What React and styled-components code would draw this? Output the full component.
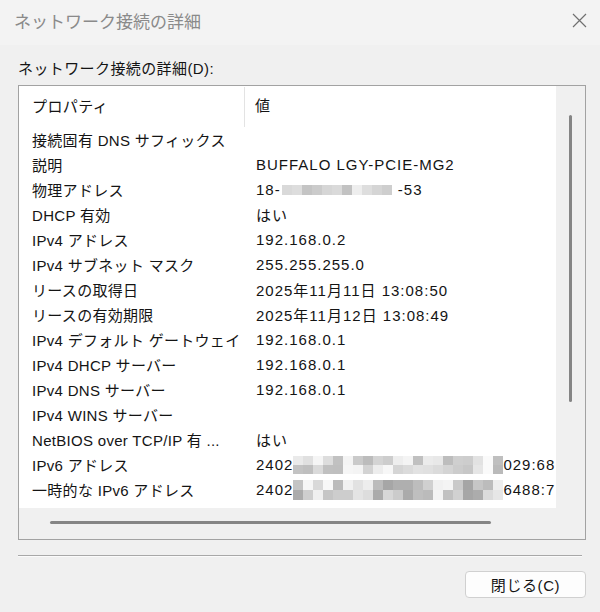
import React from 'react';
import styled, { createGlobalStyle } from 'styled-components';

const GlobalStyle = createGlobalStyle`
  html, body {
    margin: 0;
    padding: 0;
    background: #f0f0f0;
  }
  * {
    box-sizing: border-box;
  }
`;

const FONT = `"Liberation Sans", "Noto Sans CJK JP", sans-serif`;

const Window = styled.div`
  width: 600px;
  height: 612px;
  background: #f0f0f0;
  display: flex;
  flex-direction: column;
  font-family: ${FONT};
  color: #141414;
  overflow: hidden;
`;

const TitleBar = styled.div`
  height: 45px;
  background: #f3f3f3;
  display: flex;
  align-items: center;
  justify-content: space-between;
  padding: 0 13px 5px 14px;
`;

const Title = styled.div`
  font-family: "Noto Sans CJK JP", sans-serif;
  font-size: 17px;
  color: #8a8a8a;
`;

const CloseButton = styled.div`
  width: 16px;
  height: 16px;
  display: flex;
  align-items: center;
  justify-content: center;
`;

const Body = styled.div`
  flex: 1;
  display: flex;
  flex-direction: column;
  padding: 14px 14px 0 18px;
`;

const GroupLabel = styled.div`
  font-size: 15px;
  letter-spacing: 0.4px;
  line-height: 20px;
  margin-bottom: 6px;
`;

const ListBox = styled.div`
  height: 455px;
  border: 1px solid #a2a2a2;
  display: grid;
  grid-template-columns: 537px 1fr;
  grid-template-rows: 422px 1fr;
  background: #f0f0f0;
`;

const ListArea = styled.div`
  background: #fff;
  overflow: hidden;
  display: flex;
  flex-direction: column;
`;

const HeaderRow = styled.div`
  height: 41px;
  display: grid;
  grid-template-columns: 226px 1fr;
  align-items: stretch;
`;

const HeaderCell = styled.div`
  display: flex;
  align-items: center;
  padding-left: ${(p) => p.$pad}px;
  font-size: 15px;
  letter-spacing: 0.4px;
  padding-bottom: 4px;
  border-right: ${(p) => (p.$divider ? '1px solid #e3e3e3' : 'none')};
  margin-top: ${(p) => (p.$divider ? '1px' : '0')};
`;

const Row = styled.div`
  height: 25px;
  display: grid;
  grid-template-columns: 227px 1fr;
  align-items: center;
  font-size: 15px;
  white-space: nowrap;
`;

const PropCell = styled.div`
  padding-left: 13px;
  letter-spacing: 0.3px;
  overflow: hidden;
`;

const ValueCell = styled.div`
  padding-left: 10px;
  letter-spacing: 1px;
  display: flex;
  align-items: center;
  overflow: hidden;
`;

const MosaicGrid = styled.div`
  display: grid;
  grid-template-columns: repeat(${(p) => p.$cols}, ${(p) => p.$cell}px);
  grid-auto-rows: ${(p) => p.$cellH}px;
  margin: 0 ${(p) => p.$gap}px;
  flex-shrink: 0;
  align-self: ${(p) => p.$align || 'center'};
`;

const VScroll = styled.div`
  background: #f0f0f0;
  display: flex;
  justify-content: center;
  padding: 29px 1px 0 0;
`;

const VThumb = styled.div`
  width: 3px;
  height: 287px;
  background: #858585;
  border-radius: 2px;
`;

const HScroll = styled.div`
  background: #f0f0f0;
  padding: 13px 0 0 31px;
`;

const HThumb = styled.div`
  width: 441px;
  height: 3px;
  background: #858585;
  border-radius: 2px;
`;

const Corner = styled.div`
  background: #f0f0f0;
`;

const Separator = styled.div`
  height: 2px;
  margin: 15px 4px 0 0;
  border-top: 1px solid #a8a8a8;
  border-bottom: 1px solid #fbfbfb;
`;

const Footer = styled.div`
  display: flex;
  justify-content: flex-end;
  padding-top: 14px;
`;

const Button = styled.button`
  width: 121px;
  height: 27px;
  border: 1px solid #d0d0d0;
  border-radius: 4px;
  background: #fdfdfd;
  font-family: ${FONT};
  font-size: 15px;
  letter-spacing: 0.6px;
  color: #141414;
  padding: 0 0 1px 0;
`;

function makeCells(count, seed, min, max) {
  let s = seed;
  const out = [];
  for (let i = 0; i < count; i++) {
    s = (s * 9301 + 49297) % 233280;
    const v = Math.round(min + (s / 233280) * (max - min));
    out.push(`rgb(${v},${v},${v})`);
  }
  return out;
}

const Mosaic = ({ cols, rows, cell = 10, cellH = 10, seed, min = 200, max = 250, gap = 0, align }) => {
  const cells = makeCells(cols * rows, seed, min, max);
  return (
    <MosaicGrid $cols={cols} $cell={cell} $cellH={cellH} $gap={gap} $align={align}>
      {cells.map((c, i) => (
        <div key={i} style={{ background: c }} />
      ))}
    </MosaicGrid>
  );
};

const rows = [
  ['接続固有 DNS サフィックス', ''],
  ['説明', 'BUFFALO LGY-PCIE-MG2'],
  ['物理アドレス', 'mac'],
  ['DHCP 有効', 'はい'],
  ['IPv4 アドレス', '192.168.0.2'],
  ['IPv4 サブネット マスク', '255.255.255.0'],
  ['リースの取得日', '2025年11月11日 13:08:50'],
  ['リースの有効期限', '2025年11月12日 13:08:49'],
  ['IPv4 デフォルト ゲートウェイ', '192.168.0.1'],
  ['IPv4 DHCP サーバー', '192.168.0.1'],
  ['IPv4 DNS サーバー', '192.168.0.1'],
  ['IPv4 WINS サーバー', ''],
  ['NetBIOS over TCP/IP 有 ...', 'はい'],
  ['IPv6 アドレス', 'v6a'],
  ['一時的な IPv6 アドレス', 'v6b'],
];

const renderValue = (v) => {
  if (v === 'mac') {
    return (
      <>
        <span>18-</span>
        <Mosaic cols={11} rows={1} seed={7} min={190} max={245} gap={1} />
        <span>&nbsp;-53</span>
      </>
    );
  }
  if (v === 'v6a') {
    return (
      <>
        <span>2402</span>
        <Mosaic cols={21} rows={2} cell={10} cellH={9} seed={13} min={185} max={252} align="flex-end" />
        <span>029:68</span>
      </>
    );
  }
  if (v === 'v6b') {
    return (
      <>
        <span>2402</span>
        <Mosaic cols={21} rows={2} cell={10} cellH={10} seed={29} min={165} max={250} align="flex-start" />
        <span>6488:7</span>
      </>
    );
  }
  return v;
};

export default function App() {
  return (
    <>
      <GlobalStyle />
      <Window>
        <TitleBar>
          <Title>ネットワーク接続の詳細</Title>
          <CloseButton>
            <svg width="15" height="15" viewBox="0 0 15 15">
              <path d="M1 1 L14 14 M14 1 L1 14" stroke="#707070" strokeWidth="1.2" fill="none" />
            </svg>
          </CloseButton>
        </TitleBar>
        <Body>
          <GroupLabel>ネットワーク接続の詳細(D):</GroupLabel>
          <ListBox>
            <ListArea>
              <HeaderRow>
                <HeaderCell $pad={13} $divider>プロパティ</HeaderCell>
                <HeaderCell $pad={10}>値</HeaderCell>
              </HeaderRow>
              {rows.map(([p, v], i) => (
                <Row key={i}>
                  <PropCell>{p}</PropCell>
                  <ValueCell>{renderValue(v)}</ValueCell>
                </Row>
              ))}
            </ListArea>
            <VScroll>
              <VThumb />
            </VScroll>
            <HScroll>
              <HThumb />
            </HScroll>
            <Corner />
          </ListBox>
          <Separator />
          <Footer>
            <Button>閉じる(C)</Button>
          </Footer>
        </Body>
      </Window>
    </>
  );
}
